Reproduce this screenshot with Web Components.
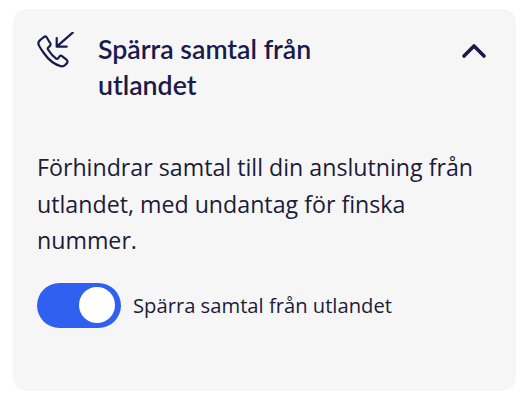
<!DOCTYPE html>
<html>
    <head>
        <meta charset="utf-8">
        <style>
            html, body { margin: 0; background: #fff; }
            body { padding: 9px 12px 23px 13px; }
        </style>
    </head>
    <body>
        <setting-card heading="Spärra samtal från utlandet">
            <svg slot="icon" width="44" height="36" viewBox="0 0 44 36" fill="none" stroke="#1b1b4b" stroke-width="2.2" stroke-linecap="round" stroke-linejoin="round">
                <path d="M3.8 7.5 L7.2 4.8 Q8.5 4 9.6 5.2 L13.4 11.5 Q14 12.9 13 13.9 L11 15.7 Q10.5 16.4 11 17.5 Q14.8 23.6 19.4 26.8 Q20.4 27.3 21 26.4 L22.6 24.3 Q23.5 23.3 24.7 23.9 L29.8 27.9 Q31 29.2 30.2 30.9 L27.9 33.2 Q26.4 34.7 24 34.2 Q14.2 31.7 6.8 21 Q1.6 13.7 1.3 11.6 Q1.5 9.1 3.8 7.5 Z"/>
                <path d="M35.7 0.6 L19.7 14.7 M19.7 6 L19.7 14.7 L29.7 14.7"/>
            </svg>
            <p>Förhindrar samtal till din anslutning från utlandet, med undantag för finska nummer.</p>
            <toggle-switch checked>Spärra samtal från utlandet</toggle-switch>
        </setting-card>
        <script>
            class SettingCard extends HTMLElement {
                constructor() {
                    super();
                    const shadowRoot = this.attachShadow({ mode: 'open' });
                    shadowRoot.innerHTML = `
                        <style>
                            :host { display: block; box-sizing: border-box; height: 382px; background: #f6f6f6; border-radius: 14px; padding: 23px 26px 0 24px; color: #1b1b4b; }
                            header { display: grid; grid-template-columns: 61px 1fr 30px; align-items: start; }
                            .icon { height: 36px; }
                            h2 { margin: -1px 0 0; font: 600 26.7px/36px "Lato", "Noto Sans", sans-serif; max-width: 240px; }
                            .chevron { margin-top: 9px; }
                            .body { margin-top: 46px; font: 400 23.2px/36.5px "Open Sans", "Noto Sans", sans-serif; color: #1c1c3a; }
                            ::slotted(p) { margin: 0 0 24px; }
                        </style>
                        <header>
                            <div class="icon"><slot name="icon"></slot></div>
                            <h2></h2>
                            <svg class="chevron" width="30" height="20" viewBox="0 0 30 20" fill="none" stroke="#1b1b4b" stroke-width="3.6" stroke-linecap="round" stroke-linejoin="round"><path d="M4 15 L14 5 L24 15"/></svg>
                        </header>
                        <div class="body"><slot></slot></div>
                    `;
                    shadowRoot.querySelector('h2').textContent = this.getAttribute('heading');
                }
            }
            window.customElements.define('setting-card', SettingCard);

            class ToggleSwitch extends HTMLElement {
                constructor() {
                    super();
                    const shadowRoot = this.attachShadow({ mode: 'open' });
                    shadowRoot.innerHTML = `
                        <style>
                            :host { display: flex; align-items: center; gap: 12px; font: 400 20.2px/28px "Open Sans", "Noto Sans", sans-serif; color: #1c1c3a; }
                            .track { width: 84px; height: 45px; border-radius: 23px; background: #3060f0; display: flex; align-items: center; justify-content: flex-end; padding-right: 6px; box-sizing: border-box; flex: none; }
                            .knob { width: 36px; height: 36px; border-radius: 50%; background: #fff; }
                        </style>
                        <span class="track"><span class="knob"></span></span>
                        <slot></slot>
                    `;
                }
            }
            window.customElements.define('toggle-switch', ToggleSwitch);
        </script>
    </body>
</html>
